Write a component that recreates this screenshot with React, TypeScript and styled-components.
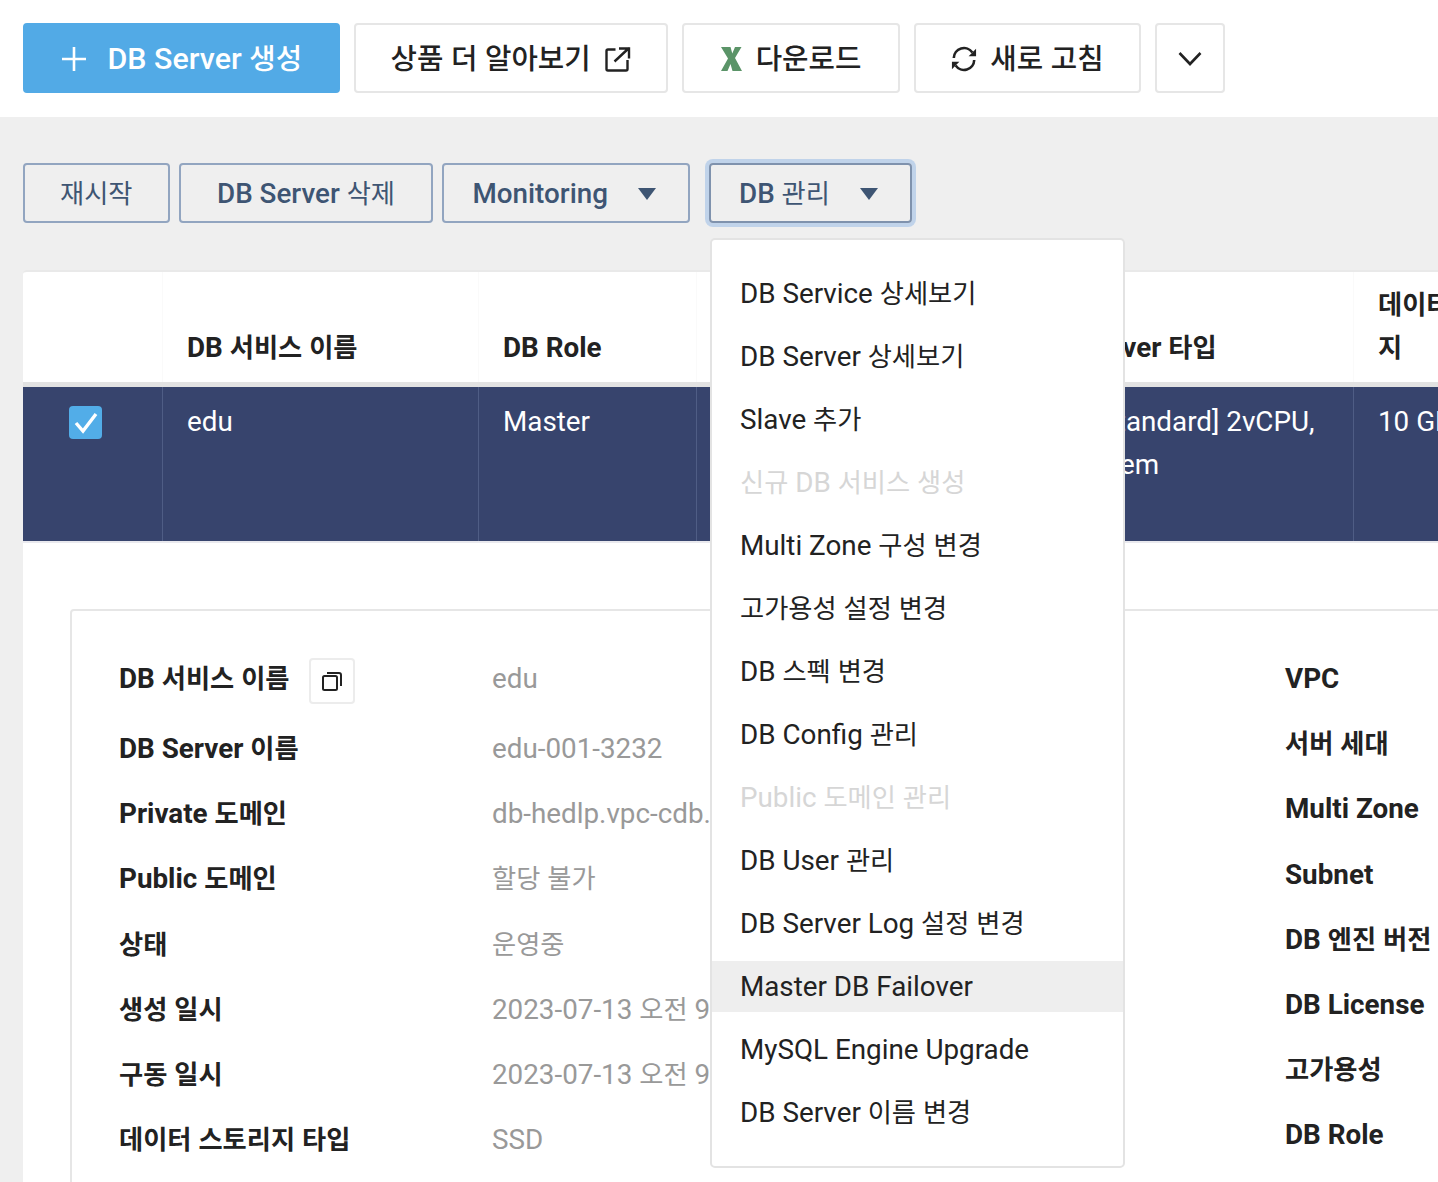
import React from 'react';
import styled, { createGlobalStyle } from 'styled-components';

const GlobalStyle = createGlobalStyle`
  html, body {
    margin: 0;
    padding: 0;
    background: #efefef;
    overflow: hidden;
  }
  * {
    box-sizing: border-box;
  }
  body {
    font-family: Roboto, 'Noto Sans CJK KR', sans-serif;
    font-size: 27.8px;
    line-height: 43.2px;
    color: #222;
  }
`;

const Page = styled.div`
  width: 1438px;
  height: 1182px;
  overflow: hidden;
`;

// the hangul runs sit a little smaller than the latin ones in this UI
const Ko = styled.span`
  font-size: 0.945em;
  line-height: 1;
`;

const T = ({ children }: { children: string }) => (
  <span>
    {children.split(/([가-힣]+)/).map((part, i) => (/[가-힣]/.test(part) ? <Ko key={i}>{part}</Ko> : part))}
  </span>
);

const Toolbar = styled.div`
  display: flex;
  gap: 14px;
  height: 117px;
  padding: 23px;
  background: #fff;
`;

const ToolButton = styled.div<{ $primary?: boolean; $pad?: number; $gap?: number }>`
  display: flex;
  align-items: center;
  justify-content: center;
  gap: ${(p) => p.$gap ?? 14}px;
  height: 70px;
  padding: 2px ${(p) => p.$pad ?? 35}px 0;
  border: 2px solid ${(p) => (p.$primary ? '#52aae6' : '#e6e6e6')};
  border-radius: 4px;
  background: ${(p) => (p.$primary ? '#52aae6' : '#fff')};
  color: ${(p) => (p.$primary ? '#fff' : '#222')};
  font-size: 30.4px;
  font-weight: 500;
  white-space: nowrap;
`;

const ActionBar = styled.div`
  display: flex;
  gap: 9.5px;
  padding: 46px 23px 47px;
`;

const ActionButton = styled.div<{ $gap?: number; $left?: number; $right?: number; $focused?: boolean }>`
  display: flex;
  align-items: center;
  gap: ${(p) => p.$gap ?? 0}px;
  height: 60px;
  padding: 2px ${(p) => p.$right ?? 36}px 0 ${(p) => p.$left ?? 36}px;
  border: 2px solid ${(p) => (p.$focused ? '#7f92ad' : '#92a5c0')};
  border-radius: 4px;
  color: #3e5573;
  font-weight: 500;
  white-space: nowrap;
  box-shadow: ${(p) => (p.$focused ? '0 0 0 4px #c0d3ea' : 'none')};

  ${Ko} {
    font-weight: 400;
  }
`;

const MenuAnchor = styled.div`
  position: relative;
  margin-left: 9.5px;
`;

const Caret = styled.span`
  width: 0;
  height: 0;
  border-left: 9px solid transparent;
  border-right: 9px solid transparent;
  border-top: 12px solid #3e5573;
`;

const Menu = styled.div`
  position: absolute;
  top: 75px;
  left: 1px;
  z-index: 10;
  display: flex;
  flex-direction: column;
  gap: 12px;
  width: 415px;
  height: 930px;
  padding: 28px 0;
  background: #fff;
  border: 2px solid #e3e3e3;
  border-radius: 5px;
`;

const MenuItem = styled.div<{ $disabled?: boolean; $active?: boolean }>`
  display: flex;
  align-items: center;
  flex: 0 0 51px;
  padding: 0 28px;
  color: ${(p) => (p.$disabled ? '#d6d6d6' : '#222')};
  background: ${(p) => (p.$active ? '#eee' : 'transparent')};
  white-space: nowrap;
`;

const Card = styled.div`
  width: 1700px;
  margin-left: 23px;
  height: 1000px;
  background: #fff;
  border-top: 2px solid #e9e9e9;
  border-radius: 4px 0 0 0;
`;

const Row = styled.div`
  display: grid;
  grid-template-columns: 140px 316px 218px 316px 341px 215px;
  line-height: 43px;
`;

const HeadRow = styled(Row)`
  height: 115px;
  border-bottom: 5px solid #e2e2e2;
`;

const HeadCell = styled.div`
  display: flex;
  align-items: flex-end;
  padding: 11px 24px 13px;
  border-right: 1px solid #fafafa;
  font-weight: 700;
`;

const BodyRow = styled(Row)`
  height: 156px;
  background: #37446d;
  border-bottom: 2px solid #e9e9ee;
`;

const BodyCell = styled.div`
  padding: 13px 24px;
  border-right: 1px solid #4f5d85;
  color: #fff;
`;

const CheckCell = styled(BodyCell)`
  padding: 19px 0 0 46px;
`;

const Checkbox = styled.div`
  display: flex;
  align-items: center;
  justify-content: center;
  width: 33px;
  height: 33px;
  border-radius: 4px;
  background: #52ade8;
`;

const DetailPanel = styled.div`
  display: grid;
  grid-template-columns: 1166px 400px;
  width: 1600px;
  margin: 66px 0 0 47px;
  padding: 46px 47px;
  border: 2px solid #e6e6e6;
  border-radius: 4px;
`;

const DetailColumn = styled.div`
  display: flex;
  flex-direction: column;
  gap: 22px;
`;

const DetailRow = styled.div`
  display: grid;
  grid-template-columns: 373px 1fr;
  align-items: start;
  white-space: nowrap;
`;

const Label = styled.div`
  display: flex;
  align-items: flex-start;
  gap: 20px;
  font-weight: 700;
`;

const Value = styled.div`
  color: #999;
`;

const CopyButton = styled.div`
  display: flex;
  align-items: center;
  justify-content: center;
  width: 46px;
  height: 46px;
  margin: 1px 0;
  border: 2px solid #ececec;
  border-radius: 4px;
`;

const PlusIcon = () => (
  <svg width="26" height="26" viewBox="0 0 26 26" fill="none" stroke="#fff" strokeWidth="2.6">
    <path d="M13 1v24M1 13h24" />
  </svg>
);

const ExternalIcon = () => (
  <svg width="26" height="26" viewBox="0 0 26 26" fill="none" stroke="#222" strokeWidth="2.4">
    <path d="M10.5 3.5H3a1.5 1.5 0 0 0-1.5 1.5V23a1.5 1.5 0 0 0 1.5 1.5h18a1.5 1.5 0 0 0 1.5-1.5v-9" />
    <path d="M9.5 15.5L24 2M14 2.5h10v10" />
  </svg>
);

const ExcelIcon = () => (
  <svg width="21" height="24" viewBox="0 0 21 24" fill="#5b9468">
    <path d="M0 0h9.5l1.8 6.5L14 0h6.5L14 11l7 13h-9.5l-2-7-3 7H0l7-12.5z" />
  </svg>
);

const RefreshIcon = () => (
  <svg width="26" height="26" viewBox="0 0 28 28" fill="none" stroke="#222" strokeWidth="2.8">
    <path d="M3 13A11 11 0 0 1 23 7" />
    <path d="M25 15A11 11 0 0 1 5 21" />
    <path d="M27 3v8h-8z" fill="#222" stroke="none" />
    <path d="M1 25v-8h8z" fill="#222" stroke="none" />
  </svg>
);

const ChevronIcon = () => (
  <svg width="24" height="16" viewBox="0 0 24 16" fill="none" stroke="#222" strokeWidth="2.6">
    <path d="M1.5 2L12 13 22.5 2" />
  </svg>
);

const CheckIcon = () => (
  <svg width="24" height="22" viewBox="0 0 24 22" fill="none" stroke="#fff" strokeWidth="3.4">
    <path d="M2 11l7 8L22 2" />
  </svg>
);

const CopyIcon = () => (
  <svg width="20" height="20" viewBox="0 0 20 20" fill="none" stroke="#222" strokeWidth="2">
    <rect x="1" y="5" width="14" height="14" rx="1.5" />
    <path d="M5 2h12a2 2 0 0 1 2 2v11" />
  </svg>
);

const menuItems = [
  { label: 'DB Service 상세보기' },
  { label: 'DB Server 상세보기' },
  { label: 'Slave 추가' },
  { label: '신규 DB 서비스 생성', disabled: true },
  { label: 'Multi Zone 구성 변경' },
  { label: '고가용성 설정 변경' },
  { label: 'DB 스펙 변경' },
  { label: 'DB Config 관리' },
  { label: 'Public 도메인 관리', disabled: true },
  { label: 'DB User 관리' },
  { label: 'DB Server Log 설정 변경' },
  { label: 'Master DB Failover', active: true },
  { label: 'MySQL Engine Upgrade' },
  { label: 'DB Server 이름 변경' },
];

const leftDetails = [
  ['DB Server 이름', 'edu-001-3232'],
  ['Private 도메인', 'db-hedlp.vpc-cdb.ntruss.com'],
  ['Public 도메인', '할당 불가'],
  ['상태', '운영중'],
  ['생성 일시', '2023-07-13 오전 9:00:00'],
  ['구동 일시', '2023-07-13 오전 9:00:00'],
  ['데이터 스토리지 타입', 'SSD'],
];

const rightDetails = ['VPC', '서버 세대', 'Multi Zone', 'Subnet', 'DB 엔진 버전', 'DB License', '고가용성', 'DB Role'];

export default function App() {
  return (
    <Page>
      <GlobalStyle />
      <Toolbar>
        <ToolButton $primary $gap={21} $pad={35.5}>
          <PlusIcon />
          <T>DB Server 생성</T>
        </ToolButton>
        <ToolButton>
          <T>상품 더 알아보기</T>
          <ExternalIcon />
        </ToolButton>
        <ToolButton $pad={37}>
          <ExcelIcon />
          <T>다운로드</T>
        </ToolButton>
        <ToolButton $gap={13}>
          <RefreshIcon />
          <T>새로 고침</T>
        </ToolButton>
        <ToolButton $pad={21}>
          <ChevronIcon />
        </ToolButton>
      </Toolbar>

      <ActionBar>
        <ActionButton $left={35} $right={35}>
          <T>재시작</T>
        </ActionButton>
        <ActionButton>
          <T>DB Server 삭제</T>
        </ActionButton>
        <ActionButton $left={28} $right={32} $gap={30}>
          <T>Monitoring</T>
          <Caret />
        </ActionButton>
        <MenuAnchor>
          <ActionButton $left={28} $right={32} $gap={30} $focused>
            <T>DB 관리</T>
            <Caret />
          </ActionButton>
          <Menu>
            {menuItems.map((item) => (
              <MenuItem key={item.label} $disabled={item.disabled} $active={item.active}>
                <T>{item.label}</T>
              </MenuItem>
            ))}
          </Menu>
        </MenuAnchor>
      </ActionBar>

      <Card>
        <HeadRow>
          <HeadCell />
          <HeadCell>
            <T>DB 서비스 이름</T>
          </HeadCell>
          <HeadCell>
            <T>DB Role</T>
          </HeadCell>
          <HeadCell />
          <HeadCell>
            <T>DB Server 타입</T>
          </HeadCell>
          <HeadCell>
            <T>데이터 스토리지</T>
          </HeadCell>
        </HeadRow>
        <BodyRow>
          <CheckCell>
            <Checkbox>
              <CheckIcon />
            </Checkbox>
          </CheckCell>
          <BodyCell>edu</BodyCell>
          <BodyCell>Master</BodyCell>
          <BodyCell />
          <BodyCell>vDB [Standard] 2vCPU, 8GB Mem</BodyCell>
          <BodyCell>10 GB</BodyCell>
        </BodyRow>
        <DetailPanel>
          <DetailColumn>
            <DetailRow>
              <Label>
                <T>DB 서비스 이름</T>
                <CopyButton>
                  <CopyIcon />
                </CopyButton>
              </Label>
              <Value>edu</Value>
            </DetailRow>
            {leftDetails.map(([label, value]) => (
              <DetailRow key={label}>
                <Label>
                  <T>{label}</T>
                </Label>
                <Value>
                  <T>{value}</T>
                </Value>
              </DetailRow>
            ))}
          </DetailColumn>
          <DetailColumn>
            {rightDetails.map((label) => (
              <Label key={label}>
                <T>{label}</T>
              </Label>
            ))}
          </DetailColumn>
        </DetailPanel>
      </Card>
    </Page>
  );
}
